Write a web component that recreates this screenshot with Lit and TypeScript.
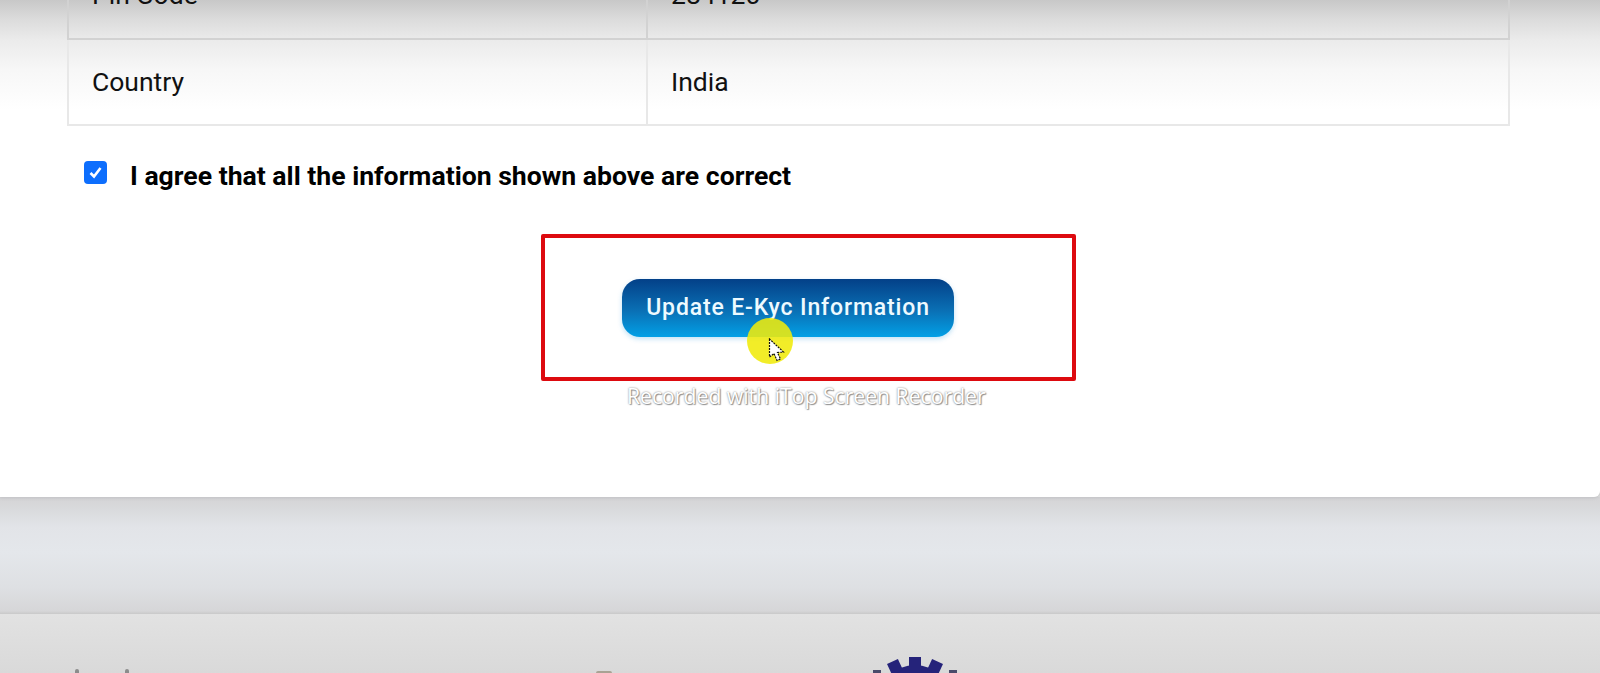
import { LitElement, html, css } from "lit";
import { customElement } from "lit/decorators.js";

@customElement("app-root")
export class AppRoot extends LitElement {
  static styles = css`
    :host { display: block; width: 1600px; height: 673px; overflow: hidden; position: relative; font-family: Roboto, "Liberation Sans", sans-serif; background: #dcdcdc; }
    .card { display: flow-root; height: 497px; box-sizing: border-box; padding: 0 91px 0 67px; background: linear-gradient(#c8c8c8 0, #dcdcdc 20px, #ebebeb 40px, #f7f7f7 70px, #ffffff 110px); border-bottom-right-radius: 6px; box-shadow: 0 1px 3px rgba(150,150,155,.3); position: relative; }
    table { width: 1443px; border-collapse: collapse; table-layout: fixed; margin-top: -49px; font-size: 26.5px; color: #111; }
    td { border: 2px solid #dcdcdc; padding: 0 23px 2px; height: 87px; box-sizing: border-box; }
    td:first-child { width: 579px; }
    tr:first-child td { border-color: #d2d2d2; }
    tr:last-child td { border-color: #e8e8e8; height: 86px; }
    .agree { display: flex; align-items: center; gap: 23px; margin: 34px 0 0 17px; font-weight: 700; font-size: 26.6px; color: #000; }
    .box { width: 23px; height: 23px; border-radius: 4px; background: #0d6efd; display: flex; align-items: center; justify-content: center; margin-top: -6px; }
    .frame { box-sizing: border-box; width: 535px; height: 147px; margin: 43px 0 0 474px; border: 4px solid #dd0a0f; border-radius: 2px; display: flex; justify-content: flex-start; align-items: flex-start; padding: 41px 0 0 77px; }
    .btn { width: 332px; height: 58px; border: 0; border-radius: 18px; background: linear-gradient(#034088, #0a70b5 55%, #02a0e6); color: #eefaff; font: 500 23px Roboto, sans-serif; letter-spacing: 0.85px; box-shadow: 0 2px 5px rgba(0,140,220,.25); padding: 0 0 1px; }
    .mark { margin: 0 0 0 560px; width: 360px; font: 21.2px "Open Sans", sans-serif; color: #fff; text-shadow: 0 0 2px #777, 1px 1px 1px #999; white-space: nowrap; }
    .gap { height: 117px; background: linear-gradient(#d4d4d6 0, #d8d9db 10px, #e2e4e8 30px, #e4e7eb 55px, #dee0e3 90px, #d6d6d8 114px, #c9c9c9 117px); }
    .footer { height: 59px; background: linear-gradient(#e2e2e2, #d9d9d9); display: flex; position: relative; overflow: hidden; }
    .halo { position: absolute; left: 747px; top: 318px; width: 46px; height: 46px; border-radius: 50%; background: rgba(240,235,10,.88); }
    .cursor { position: absolute; left: 768px; top: 338px; }
    .gear { position: absolute; left: 873px; top: 43px; }
    .tick { position: absolute; top: 55px; width: 4px; height: 6px; border-radius: 2px; background: #8c8c8c; }
    .t1 { left: 75px; }
    .t2 { left: 125px; }
    .t3 { left: 596px; width: 16px; background: #a9a294; top: 57px; }
  `;

  render() {
    return html`
      <div class="card">
        <table>
          <tr><td>Pin Code</td><td>284120</td></tr>
          <tr><td>Country</td><td>India</td></tr>
        </table>
        <div class="agree">
          <span class="box"><svg width="15" height="15" viewBox="0 0 15 15"><path d="M2.5 8 L6 11.5 L12.5 3" fill="none" stroke="#fff" stroke-width="2.6"/></svg></span>
          <span>I agree that all the information shown above are correct</span>
        </div>
        <div class="frame"><button class="btn">Update E-Kyc Information</button></div>
        <div class="mark">Recorded with iTop Screen Recorder</div>
      </div>
      <div class="gap"></div>
      <div class="footer">
        <span class="tick t1"></span><span class="tick t2"></span><span class="tick t3"></span>
        <svg class="gear" width="84" height="16" viewBox="0 0 84 16">
          <g fill="#25237a">
            <circle cx="42" cy="44" r="36"/>
            <rect x="36" y="0" width="12" height="12"/>
            <rect x="16" y="4" width="12" height="12" transform="rotate(-25 22 10)"/>
            <rect x="56" y="4" width="12" height="12" transform="rotate(25 62 10)"/>
            <rect x="0" y="13" width="8" height="6" fill="#4a4a6a"/>
            <rect x="76" y="13" width="8" height="6" fill="#4a4a6a"/>
          </g>
        </svg>
      </div>
      <div class="halo"></div>
      <svg class="cursor" width="18" height="26" viewBox="0 0 18 26"><path d="M1.5 1 L1.5 19 L6 15.5 L9 22.5 L12.5 21 L9.5 14.5 L15.5 14 Z" fill="#fff" stroke="#111" stroke-width="1.2" stroke-dasharray="2 1"/></svg>
    `;
  }
}
